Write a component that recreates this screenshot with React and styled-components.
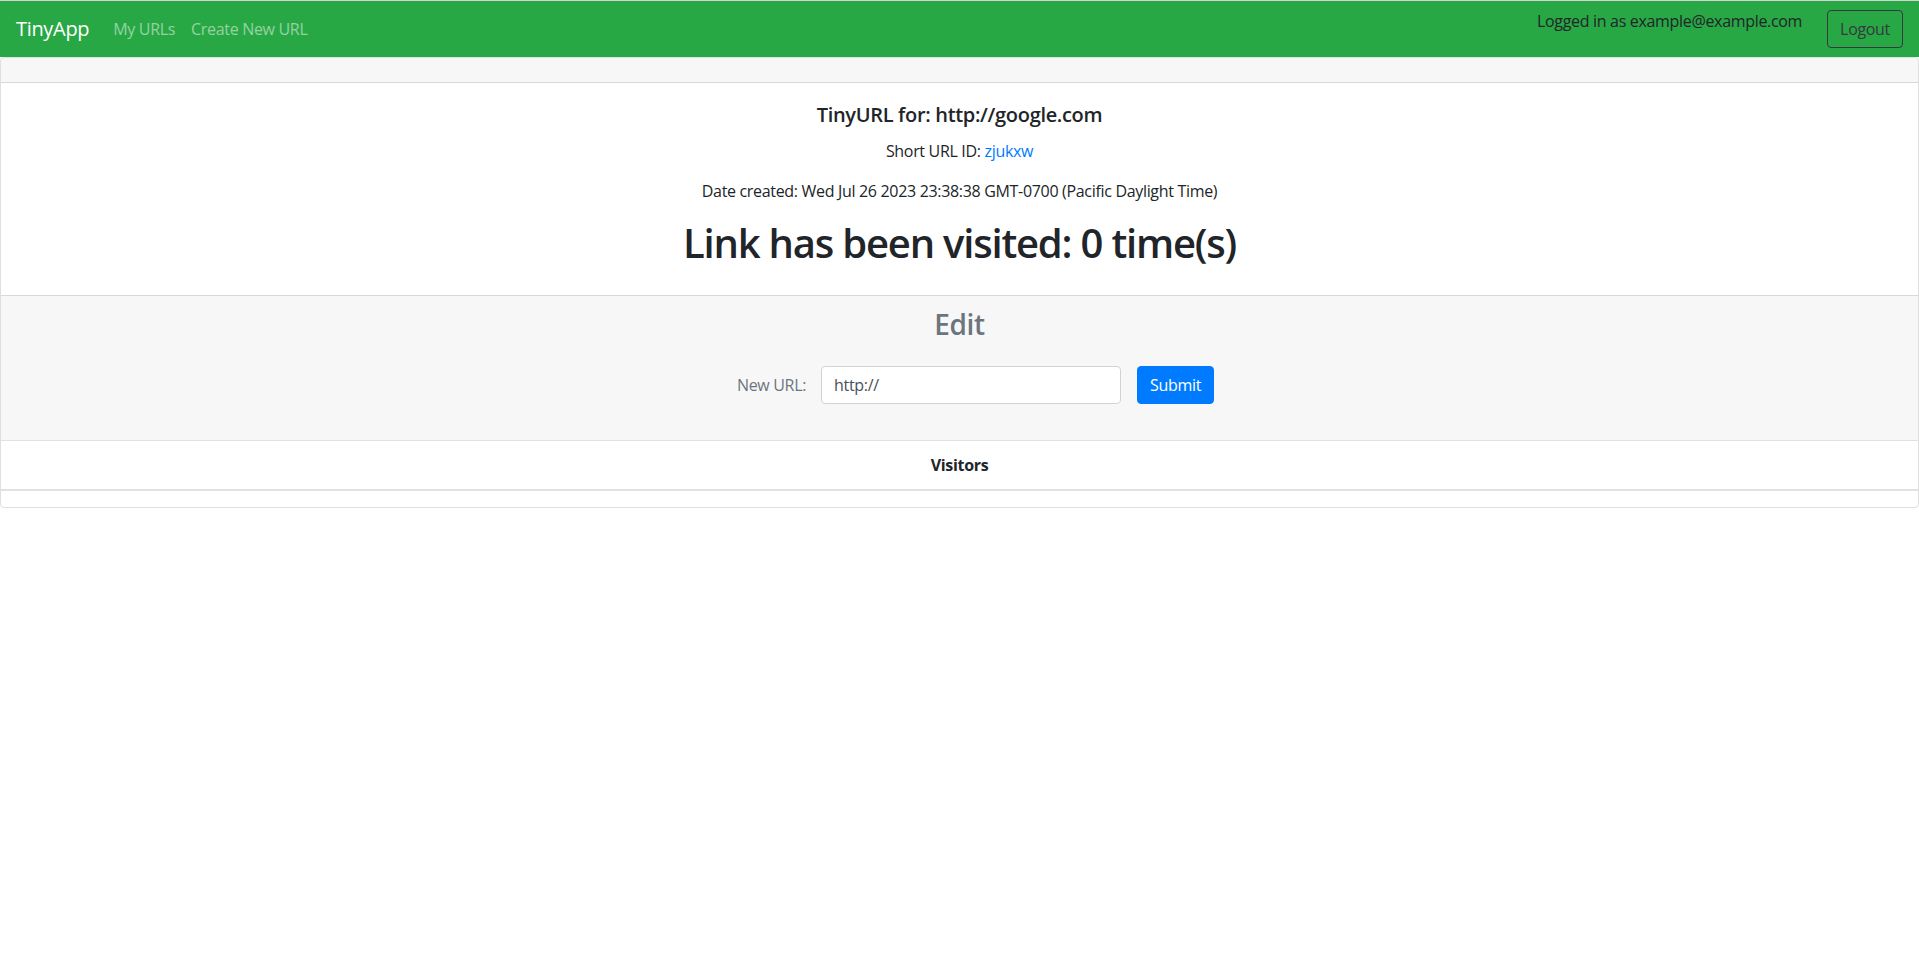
import styled, { createGlobalStyle } from "styled-components";

const GlobalStyle = createGlobalStyle`
  body {
    margin: 0;
    font-family: "Open Sans", "Noto Sans", sans-serif;
    font-size: 16px;
    line-height: 1.5;
    letter-spacing: -0.02em;
    color: #212529;
    background: #ffffff;
  }
  * {
    box-sizing: border-box;
  }
`;

const App = () => {
  return (
    <>
      <GlobalStyle />
      <Navbar>
        <NavLeft>
          <Brand href="#">TinyApp</Brand>
          <NavLink href="#">My URLs</NavLink>
          <NavLink href="#">Create New URL</NavLink>
        </NavLeft>
        <NavRight>
          <LoggedIn>Logged in as example@example.com</LoggedIn>
          <OutlineBtn>Logout</OutlineBtn>
        </NavRight>
      </Navbar>
      <Card>
        <CardHeader />
        <CardBody>
          <CardTitle>TinyURL for: http://google.com</CardTitle>
          <CardText>
            Short URL ID: <Link href="#">zjukxw</Link>
          </CardText>
          <CardText>
            Date created: Wed Jul 26 2023 23:38:38 GMT-0700 (Pacific Daylight
            Time)
          </CardText>
          <Visits>Link has been visited: 0 time(s)</Visits>
        </CardBody>
        <CardFooter>
          <EditTitle>Edit</EditTitle>
          <EditForm onSubmit={(e) => e.preventDefault()}>
            <Label htmlFor="longURL">New URL:</Label>
            <Input id="longURL" type="text" defaultValue="http://" />
            <SubmitBtn type="submit">Submit</SubmitBtn>
          </EditForm>
        </CardFooter>
        <Table>
          <thead>
            <tr>
              <Th>Visitors</Th>
            </tr>
          </thead>
          <tbody />
        </Table>
      </Card>
    </>
  );
};

export default App;

const Navbar = styled.nav`
  display: flex;
  align-items: stretch;
  justify-content: space-between;
  padding: 8px 16px;
  background-color: #28a745;
  border-top: 1px solid #d4d4d4;
`;

const NavLeft = styled.div`
  display: flex;
  align-items: center;
`;

const Brand = styled.a`
  font-size: 20px;
  line-height: 30px;
  padding: 5px 0;
  margin-right: 16px;
  color: #ffffff;
  text-decoration: none;
`;

const NavLink = styled.a`
  padding: 8px;
  line-height: 24px;
  color: rgba(255, 255, 255, 0.5);
  text-decoration: none;
`;

const NavRight = styled.div`
  display: flex;
  align-items: center;
  gap: 25px;
`;

const LoggedIn = styled.span`
  align-self: flex-start;
  line-height: 24px;
  color: #212529;
`;

const OutlineBtn = styled.button`
  font: inherit;
  letter-spacing: inherit;
  line-height: 24px;
  padding: 6px 12px;
  color: #343a40;
  background: transparent;
  border: 1px solid #343a40;
  border-radius: 4px;
`;

const Card = styled.div`
  border: 1px solid rgba(0, 0, 0, 0.125);
  border-radius: 4px;
  overflow: hidden;
`;

const CardHeader = styled.div`
  padding: 12px 20px;
  background-color: rgba(0, 0, 0, 0.03);
  border-bottom: 1px solid rgba(0, 0, 0, 0.125);
`;

const CardBody = styled.div`
  padding: 20px;
  text-align: center;
`;

const CardTitle = styled.h5`
  margin: 0 0 12px;
  font-size: 20px;
  font-weight: 600;
  line-height: 1.2;
`;

const CardText = styled.p`
  margin: 0 0 16px;
`;

const Link = styled.a`
  color: #007bff;
  text-decoration: none;
`;

const Visits = styled.h1`
  margin: 0 0 8px;
  font-size: 40px;
  font-weight: 600;
  line-height: 1.2;
  letter-spacing: -0.03em;
`;

const CardFooter = styled.div`
  padding: 12px 20px 36px;
  background-color: rgba(0, 0, 0, 0.03);
  border-top: 1px solid rgba(0, 0, 0, 0.125);
  text-align: center;
`;

const EditTitle = styled.h3`
  margin: 0 0 24px;
  font-size: 28px;
  font-weight: 600;
  line-height: 1.2;
  color: #6c757d;
`;

const EditForm = styled.form`
  display: flex;
  align-items: center;
  justify-content: center;
  padding-left: 32px;
`;

const Label = styled.label`
  margin-right: 15px;
  color: #6c757d;
`;

const Input = styled.input`
  width: 300px;
  height: 38px;
  padding: 6px 12px;
  font: inherit;
  letter-spacing: inherit;
  color: #495057;
  background: #ffffff;
  border: 1px solid #ced4da;
  border-radius: 4px;
  margin-right: 16px;
`;

const SubmitBtn = styled.button`
  font: inherit;
  letter-spacing: inherit;
  line-height: 24px;
  padding: 6px 12px;
  color: #ffffff;
  background-color: #007bff;
  border: 1px solid #007bff;
  border-radius: 4px;
`;

const Table = styled.table`
  width: 100%;
  margin-bottom: 16px;
  border-collapse: collapse;
`;

const Th = styled.th`
  padding: 12px;
  line-height: 24px;
  font-weight: 700;
  border-top: 1px solid #dee2e6;
  border-bottom: 2px solid #dee2e6;
`;
